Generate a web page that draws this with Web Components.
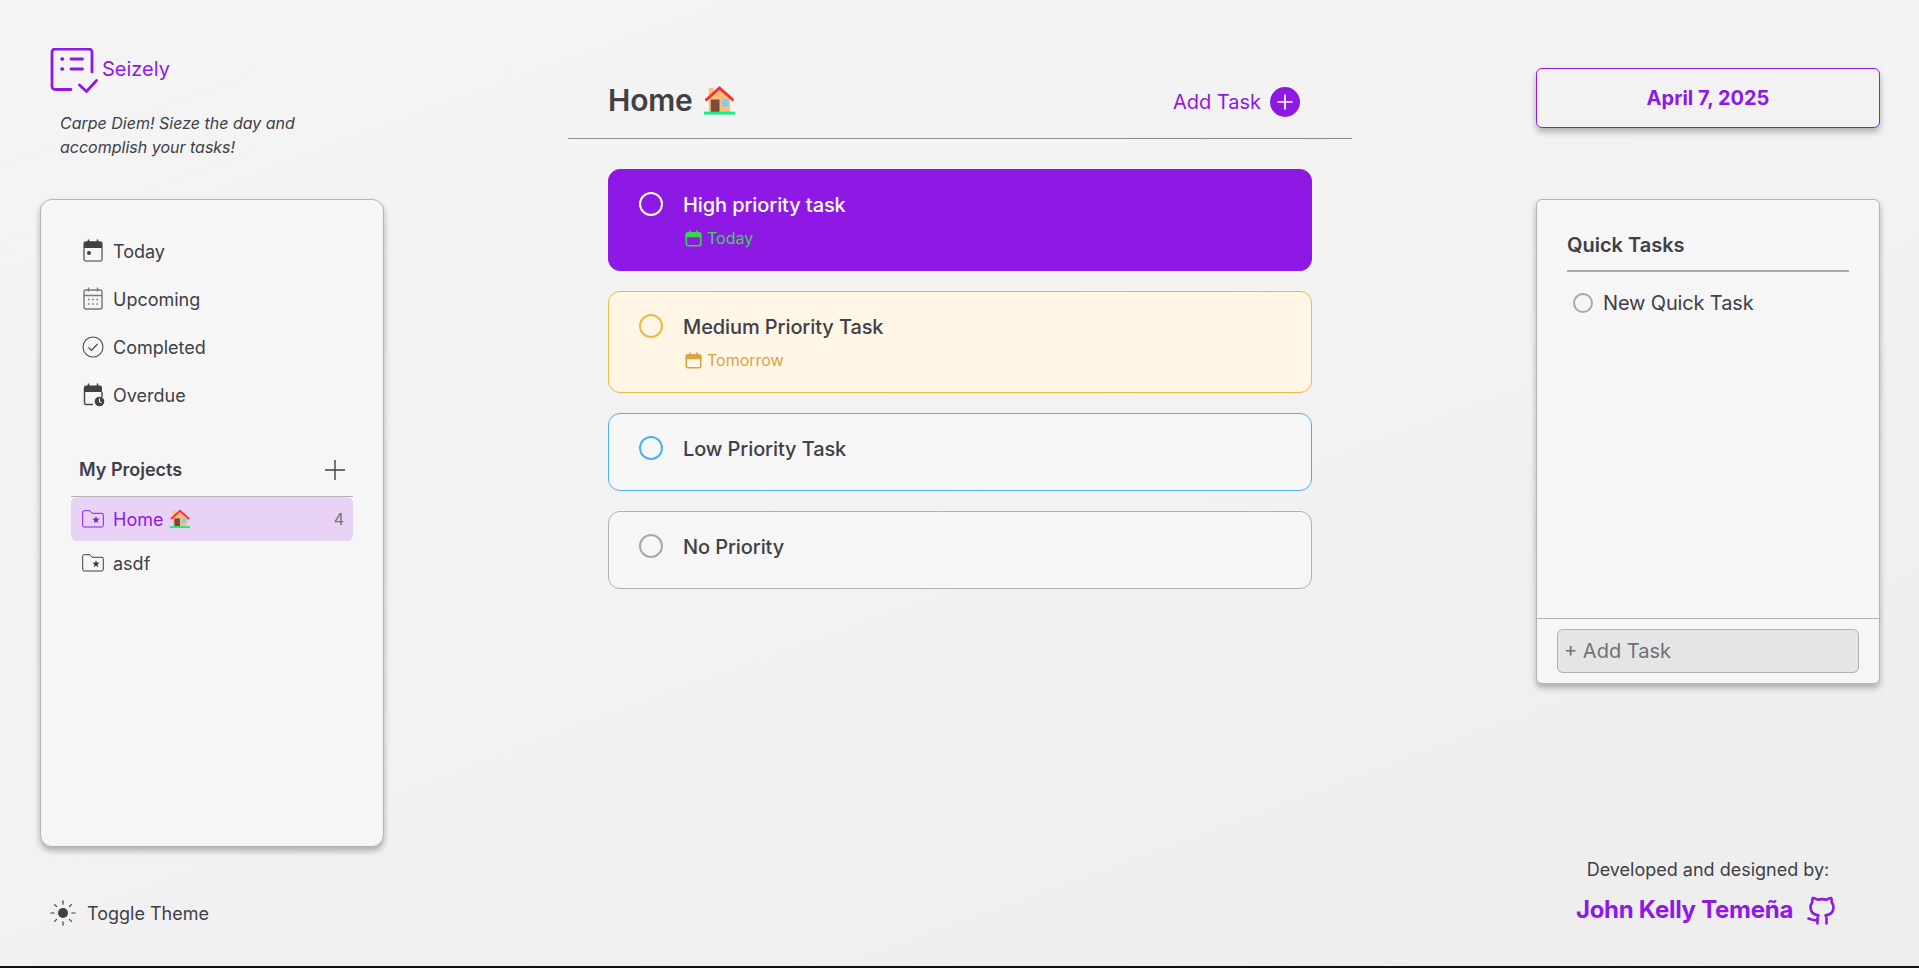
<!DOCTYPE html>
<html lang="en">
<head>
<meta charset="utf-8">
<title>Seizely</title>
<style>
  html, body { margin: 0; height: 100%; }
  body {
    font-family: Inter, "Noto Sans", sans-serif;
    color: #404046;
    background: linear-gradient(160deg, #f4f4f4 0%, #f2f2f2 50%, #ededed 100%);
    overflow: hidden;
  }
</style>
</head>
<body>
<app-shell>
  <side-bar slot="left">
    <nav-item icon="today">Today</nav-item>
    <nav-item icon="upcoming">Upcoming</nav-item>
    <nav-item icon="completed">Completed</nav-item>
    <nav-item icon="overdue">Overdue</nav-item>
    <project-item slot="projects" active count="4">Home <house-icon size="20"></house-icon></project-item>
    <project-item slot="projects">asdf</project-item>
  </side-bar>

  <task-board slot="main">
    <task-card priority="high" date="Today">High priority task</task-card>
    <task-card priority="medium" date="Tomorrow">Medium Priority Task</task-card>
    <task-card priority="low">Low Priority Task</task-card>
    <task-card>No Priority</task-card>
  </task-board>

  <right-panel slot="right">
    <quick-item>New Quick Task</quick-item>
  </right-panel>
</app-shell>

<script>
// iconos compartidos
const ICONS = {
  today: `<svg width="22" height="24" viewBox="0 0 22 24"><rect x="2" y="3" width="18" height="19" rx="2" fill="none" stroke="#77777b" stroke-width="1.6"/><path d="M2 4.500a2 2 0 0 1 2-2h14a2 2 0 0 1 2 2V9H2z" fill="#404046"/><path d="M6.500 .5v3M15.500 .5v3" stroke="#404046" stroke-width="1.6"/><circle cx="7" cy="14" r="2" fill="#404046"/></svg>`,
  upcoming: `<svg width="22" height="24" viewBox="0 0 22 24" fill="none" stroke="#77777b" stroke-width="1.4"><rect x="2" y="3" width="18" height="19" rx="2"/><path d="M2 8.500h18M6.500 .5v4M15.500 .5v4"/><path d="M6 12.500h1.600M10.200 12.500h1.600M14.400 12.500H16M6 17h1.600M10.200 17h1.600M14.400 17H16" stroke-width="1.7"/></svg>`,
  completed: `<svg width="22" height="22" viewBox="0 0 22 22" fill="none" stroke="#4a4a50" stroke-width="1.1"><circle cx="11" cy="11" r="10"/><path d="M6.500 11.500l3 3 6-6.500" stroke-width="1.2"/></svg>`,
  overdue: `<svg width="23" height="24" viewBox="0 0 23 24"><path d="M11 21.500H4a1.500 1.500 0 0 1-1.500-1.500V5" fill="none" stroke="#4a4a50" stroke-width="1.5"/><path d="M2 4.500a2 2 0 0 1 2-2h14a2 2 0 0 1 2 2V9H2z" fill="#404046"/><path d="M20 9v5" stroke="#4a4a50" stroke-width="1.5"/><path d="M6.500 .5v3M15.500 .5v3" stroke="#404046" stroke-width="1.6"/><circle cx="17.500" cy="18.500" r="4.800" fill="#404046"/><path d="M17.500 15.500v3.200l2 1.200" fill="none" stroke="#f6f6f6" stroke-width="1.100"/></svg>`,
  folder: `<svg width="22" height="18" viewBox="0 0 22 18" fill="none" stroke="currentColor" stroke-width="1"><path d="M.7 15.500V2.200A1.500 1.500 0 0 1 2.200 .7h5.600l2.200 2.600h10a1.500 1.500 0 0 1 1.300 1.500v11A1.500 1.500 0 0 1 19.800 17H2.200A1.500 1.500 0 0 1 .7 15.500z"/><path d="M14 6.200l1 2.400 2.500.2-1.900 1.700.6 2.500-2.200-1.300-2.200 1.300.6-2.500-1.900-1.700 2.500-.2z" fill="currentColor" stroke="none"/></svg>`,
  date: `<svg width="17" height="17" viewBox="0 0 17 17" fill="none" stroke="currentColor" stroke-width="1.6"><rect x="1.300" y="3" width="14.400" height="12.800" rx="1.600"/><path d="M1.300 4.400a1.400 1.400 0 0 1 1.400-1.400h11.600a1.400 1.400 0 0 1 1.400 1.400V6.400H1.300z" fill="currentColor"/><path d="M5 .6v2.600M12 .6v2.600"/></svg>`
};

class AppShell extends HTMLElement {
  constructor() {
    super();
    this.attachShadow({ mode: "open" });
    this.shadowRoot.innerHTML = `
      <style>
        :host { display: flex; justify-content: space-between; box-sizing: border-box; height: 968px; padding: 0 39px 0 40px; border-bottom: 2px solid #111; }
      </style>
      <slot name="left"></slot>
      <slot name="main"></slot>
      <slot name="right"></slot>
    `;
  }
}
customElements.define("app-shell", AppShell);

class HouseIcon extends HTMLElement {
  constructor() {
    super();
    this.attachShadow({ mode: "open" });
    const s = this.getAttribute("size") || 32;
    // dibujo de la casita del emoji
    this.shadowRoot.innerHTML = `
      <style>:host { display: inline-flex; vertical-align: middle; }</style>
      <svg role="img" aria-label="house" width="${s}" height="${s}" viewBox="0 0 32 30">
        <rect x="5" y="2" width="5" height="12" fill="#f7c47f"/>
        <path d="M5 13L16 3l11 10v14H5z" fill="#f7c07a"/>
        <path d="M1.500 15L16 2l14.500 13" fill="none" stroke="#f9302e" stroke-width="3"/>
        <rect x="7" y="14" width="9" height="13" fill="#7d4a3a"/>
        <rect x="18.500" y="14" width="7" height="7" fill="#84c8f6"/>
        <rect x="0" y="26.500" width="32" height="3" fill="#10ef8c"/>
      </svg>`;
  }
}
customElements.define("house-icon", HouseIcon);

class NavItem extends HTMLElement {
  constructor() {
    super();
    this.attachShadow({ mode: "open" });
    this.shadowRoot.innerHTML = `
      <style>
        :host { display: flex; align-items: center; height: 48px; font-size: 18px; color: #404046; }
        .i { width: 24px; height: 24px; margin-right: 8px; display: flex; align-items: center; justify-content: center; }
      </style>
      <span class="i">${ICONS[this.getAttribute("icon")]}</span><slot></slot>
    `;
  }
}
customElements.define("nav-item", NavItem);

class ProjectItem extends HTMLElement {
  constructor() {
    super();
    this.attachShadow({ mode: "open" });
    const count = this.getAttribute("count");
    this.shadowRoot.innerHTML = `
      <style>
        :host { display: flex; align-items: center; height: 44px; padding: 0 9px 0 11px; font-size: 18px; color: #404046; border-radius: 6px; }
        :host([active]) { background: #e8d3f7; color: #8f19e4; }
        svg { display: block; margin-right: 9px; }
        .t { flex: 1; display: flex; align-items: center; gap: 7px; }
        .c { font-size: 16px; color: #71717a; }
      </style>
      ${ICONS.folder}<span class="t"><slot></slot></span>${count ? `<span class="c">${count}</span>` : ""}
    `;
  }
}
customElements.define("project-item", ProjectItem);

class SideBar extends HTMLElement {
  constructor() {
    super();
    this.attachShadow({ mode: "open" });
    this.shadowRoot.innerHTML = `
      <style>
        :host { display: flex; flex-direction: column; width: 344px; }
        .brand { display: flex; align-items: center; padding: 48px 0 0 10px; height: 45px; color: #8f19e4; font-size: 20px; }
        .brand svg { margin-right: 4px; flex: none; }
        .brand span { padding-bottom: 4px; }
        .tag { margin: 18px 0 0 20px; font-style: italic; font-size: 16px; line-height: 24px; color: #404046; }
        .card { box-sizing: border-box; margin-top: 40px; height: 648px; background: #f6f6f6; border: 1px solid #b4b4b4; border-radius: 12px; box-shadow: 0 4px 6px rgba(0,0,0,.28); padding: 27px 30px 0; }
        .nav { padding-left: 10px; }
        .head { display: flex; align-items: center; justify-content: space-between; height: 53px; padding: 6px 8px 0; margin-top: 18px; font-size: 18px; font-weight: 600; border-bottom: 1px solid #b4b4b4; }
        .head svg { display: block; }
        .toggle { display: flex; align-items: center; margin: 53px 0 0 10px; font-size: 18px; }
        .toggle svg { margin-right: 11px; }
      </style>
      <div class="brand">
        <svg width="48" height="46" viewBox="0 0 48 46" fill="none" stroke="#8f19e4" stroke-width="2.8" stroke-linecap="round" stroke-linejoin="round">
          <path d="M21 41.500H5a3 3 0 0 1-3-3V4a3 3 0 0 1 3-3h34a3 3 0 0 1 3 3v20"/>
          <path d="M21 11h11.500M21 21h11.500"/>
          <path d="M12 11h.5M12 21h.5" stroke-width="3.6"/>
          <path d="M29.500 37l7 6.500 10-11"/>
        </svg>
        <span>Seizely</span>
      </div>
      <p class="tag">Carpe Diem! Sieze the day and<br>accomplish your tasks!</p>
      <div class="card">
        <div class="nav"><slot></slot></div>
        <div class="head">My Projects
          <svg width="20" height="20" viewBox="0 0 20 20" stroke="#404046" stroke-width="1.4"><path d="M10 0v20M0 10h20"/></svg>
        </div>
        <slot name="projects"></slot>
      </div>
      <div class="toggle">
        <svg width="26" height="26" viewBox="0 0 26 26" stroke="#404046" stroke-width="1.2" stroke-linecap="round">
          <circle cx="13" cy="13" r="5" fill="#404046" stroke="none"/>
          <path d="M13 .8v3.400M13 21.800v3.400M.8 13h3.400M21.800 13h3.400M4.600 4.600l2 2M19.400 19.400l2 2M4.600 21.400l2-2M19.400 6.600l2-2"/>
        </svg>
        Toggle Theme
      </div>
    `;
  }
}
customElements.define("side-bar", SideBar);

class TaskBoard extends HTMLElement {
  constructor() {
    super();
    this.attachShadow({ mode: "open" });
    this.shadowRoot.innerHTML = `
      <style>
        :host { display: block; width: 784px; }
        .top { box-sizing: border-box; display: flex; align-items: center; justify-content: space-between; height: 139px; padding: 62px 52px 0 40px; border-bottom: 1px solid #8e8e8e; }
        h1 { margin: 0; display: flex; align-items: center; gap: 11px; font-size: 30px; line-height: 36px; font-weight: 600; letter-spacing: -.2px; color: #404046; }
        .add { display: flex; align-items: center; gap: 9px; margin-top: 4px; font-size: 20px; color: #8f19e4; }
        .plus { width: 30px; height: 30px; display: block; }
        .list { display: flex; flex-direction: column; gap: 20px; padding: 30px 40px 0; }
      </style>
      <div class="top">
        <h1>Home <house-icon size="31"></house-icon></h1>
        <div class="add">Add Task
          <svg class="plus" viewBox="0 0 30 30"><circle cx="15" cy="15" r="15" fill="#8f19e4"/><path d="M15 7.500v15M7.500 15h15" stroke="#fff" stroke-width="1.7"/></svg>
        </div>
      </div>
      <div class="list"><slot></slot></div>
    `;
  }
}
customElements.define("task-board", TaskBoard);

class TaskCard extends HTMLElement {
  constructor() {
    super();
    this.attachShadow({ mode: "open" });
    const date = this.getAttribute("date");
    this.shadowRoot.innerHTML = `
      <style>
        :host { display: flex; box-sizing: border-box; min-height: 78px; padding: 20px 30px; gap: 20px; font-size: 20px; font-weight: 450; line-height: 30px; letter-spacing: -.1px; color: #404046; background: #f6f6f6; border: 1px solid #b0b0b0; border-radius: 12px; --ring: #a8a8a8; --date: #71717a; }
        :host([priority="high"]) { background: #8f19e4; border-color: #8f19e4; color: #fff; --ring: #fff; --date: #3fd24f; }
        :host([priority="medium"]) { background: #fff6e6; border-color: #ebb94a; --ring: #ebb94a; --date: #d9a441; }
        :host([priority="low"]) { border-color: #4db2ec; --ring: #4db2ec; }
        .ring { flex: none; box-sizing: border-box; width: 24px; height: 24px; margin-top: 2px; border: 2px solid var(--ring); border-radius: 50%; }
        .date { display: flex; align-items: center; gap: 5px; margin: 6px 0 0 2px; height: 24px; font-size: 16px; font-weight: 400; letter-spacing: 0; color: var(--date); }
      </style>
      <span class="ring"></span>
      <div>
        <slot></slot>
        ${date ? `<div class="date">${ICONS.date}${date}</div>` : ""}
      </div>
    `;
  }
}
customElements.define("task-card", TaskCard);

class QuickItem extends HTMLElement {
  constructor() {
    super();
    this.attachShadow({ mode: "open" });
    this.shadowRoot.innerHTML = `
      <style>
        :host { display: flex; align-items: center; gap: 10px; margin-top: 6px; padding-left: 6px; height: 50px; font-size: 20px; letter-spacing: -.15px; color: #404046; }
        .ring { box-sizing: border-box; width: 20px; height: 20px; border: 2px solid #a8a8a8; border-radius: 50%; }
      </style>
      <span class="ring"></span><slot></slot>
    `;
  }
}
customElements.define("quick-item", QuickItem);

class RightPanel extends HTMLElement {
  constructor() {
    super();
    this.attachShadow({ mode: "open" });
    this.shadowRoot.innerHTML = `
      <style>
        :host { display: flex; flex-direction: column; width: 344px; padding-top: 68px; }
        .today { box-sizing: border-box; height: 60px; display: flex; align-items: center; justify-content: center; font-size: 20px; font-weight: 650; color: #8f19e4; border: 1px solid #8f19e4; border-radius: 6px; box-shadow: 0 4px 6px rgba(0,0,0,.28); }
        .card { box-sizing: border-box; display: flex; flex-direction: column; margin-top: 71px; height: 485px; background: #f6f6f6; border: 1px solid #b4b4b4; border-radius: 6px; box-shadow: 0 4px 6px rgba(0,0,0,.28); }
        .body { flex: 1; padding: 0 30px; }
        h2 { margin: 0; height: 72px; box-sizing: border-box; padding: 30px 0 0; font-size: 20px; line-height: 30px; font-weight: 600; border-bottom: 2px solid #aaa; }
        .foot { border-top: 1px solid #b4b4b4; padding: 10px 20px; }
        .input { box-sizing: border-box; height: 44px; display: flex; align-items: center; padding-left: 6px; font-size: 20px; color: #71717a; background: #e5e5e5; border: 1px solid #b0b0b0; border-radius: 6px; }
        .credit { margin-top: 175px; text-align: center; font-size: 18px; }
        .name { display: flex; align-items: center; justify-content: center; gap: 14px; margin-top: 14px; padding-right: 3px; font-size: 24px; font-weight: 700; letter-spacing: -.27px; color: #8f19e4; }
      </style>
      <div class="today">April 7, 2025</div>
      <div class="card">
        <div class="body">
          <h2>Quick Tasks</h2>
          <slot></slot>
        </div>
        <div class="foot"><div class="input">+ Add Task</div></div>
      </div>
      <div class="credit">
        Developed and designed by:
        <div class="name">John Kelly Temeña
          <svg width="30" height="31" viewBox="0 0 30 31" fill="none" stroke="#8f19e4" stroke-width="2.6" stroke-linecap="round" stroke-linejoin="round">
            <path d="M19.500 29.500v-5a4.500 4.500 0 0 0-1-3.200c3.800-.4 8-2 8-8.300a6.500 6.500 0 0 0-1.800-4.500c.2-1.500.1-3-.5-4.500 0 0-1.700-.4-4.700 1.700a17 17 0 0 0-9 0C7.500 3.600 5.800 4 5.800 4c-.6 1.500-.7 3-.5 4.500A6.500 6.500 0 0 0 3.500 13c0 6.300 4.200 7.900 8 8.300a4.500 4.500 0 0 0-1 3.200v5"/>
            <path d="M10.500 26c-4 1-5.500-.5-9-1.500"/>
          </svg>
        </div>
      </div>
    `;
  }
}
customElements.define("right-panel", RightPanel);
</script>
</body>
</html>
